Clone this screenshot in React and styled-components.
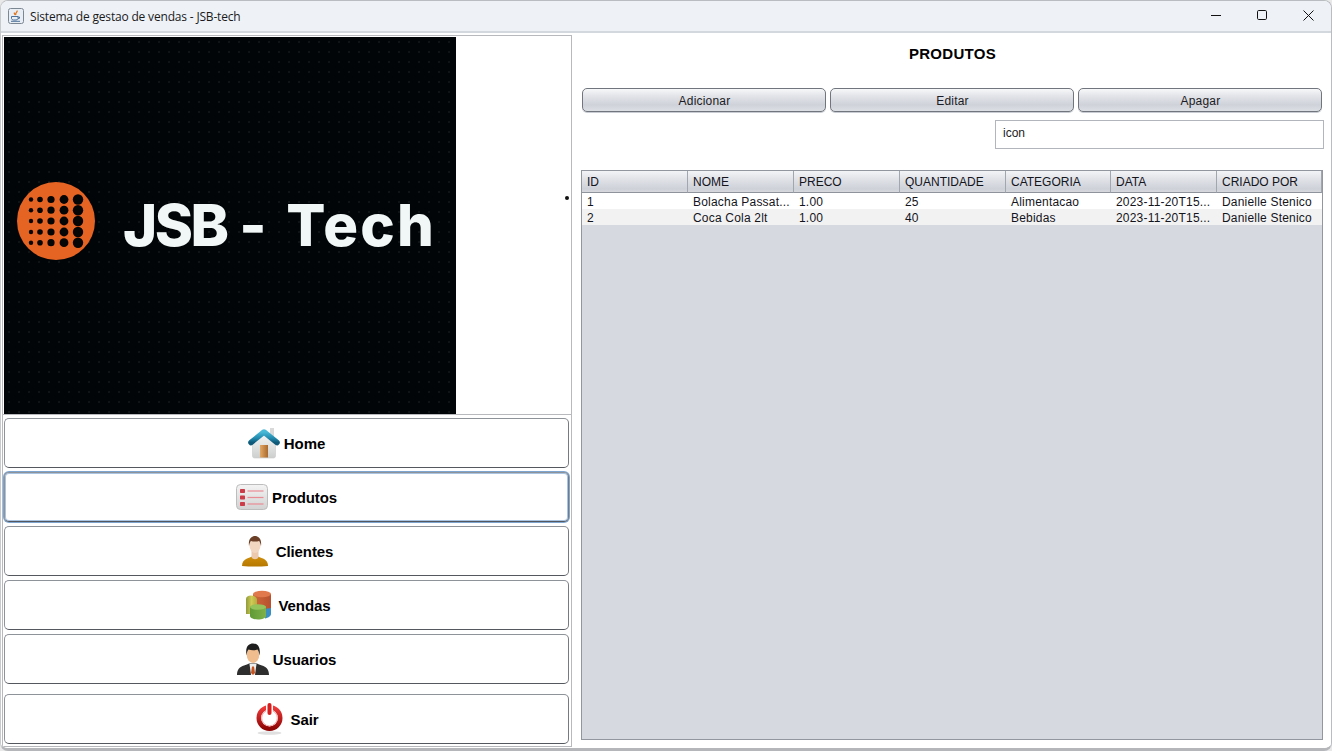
import React from "react";
import styled, { createGlobalStyle } from "styled-components";

const Global = createGlobalStyle`
  html, body { margin: 0; padding: 0; background: #e9e9e9; }
  * { box-sizing: border-box; }
`;

const Window = styled.div`
  width: 1332px; height: 751px; display: flex; flex-direction: column; overflow: hidden;
  background: #fff; border-radius: 8px; border: 1px solid #b9bcc0; border-bottom: 3px solid #b4b6b9;
  border-left-color: #c8cacd;
  font-family: "Liberation Sans", Arial, sans-serif; color: #111;
`;
const TitleBar = styled.div`
  height: 32px; flex: none; display: flex; align-items: center; background: #eef2f7;
  border-bottom: 2px solid #d3d7de; padding-left: 7px;
`;
const TitleText = styled.span`
  margin-left: 6px; font: 12px "Open Sans", "Liberation Sans", sans-serif; color: #1a1a1a; letter-spacing: -0.18px; flex: 1;
`;
const WinButton = styled.div`
  width: 46px; height: 29px; display: flex; align-items: center; justify-content: center; margin-top: -2px;
`;
const Content = styled.div`
  flex: 1; display: flex; min-height: 0; padding: 2px 0 0 1px; background: #fff;
`;
const LeftPanel = styled.div`
  width: 570px; height: 712px; flex: none; border: 1px solid #b7b9bd; padding: 1px; display: flex; flex-direction: column;
`;
const LogoFrame = styled.div`
  height: 378px; flex: none; position: relative; border-bottom: 1px solid #b7b9bd; margin: 0 -1px; padding: 0 1px;
`;
const Logo = styled.div`
  width: 452px; height: 377px; display: flex; align-items: center; background-color: #020507;
  background-image: radial-gradient(circle, #111517 0.7px, transparent 0.8px); background-size: 10px 10px;
  padding: 0 0 9px 13px;
`;
const LogoText = styled.span`
  margin: 0 0 0 28px; font: 800 58px "Inter", "Liberation Sans", sans-serif; color: #f0f7f6; white-space: pre;
  position: relative; top: 4px;
`;
const LogoWord = styled.span`
  letter-spacing: ${p => p.$spacing}px; margin-left: ${p => p.$gap || 0}px;
`;
const SplitDot = styled.i`
  position: absolute; left: 562px; top: 159px; width: 4px; height: 4px; border-radius: 50%; background: #111;
`;
const Nav = styled.div`
  display: flex; flex-direction: column; gap: 4px; padding: 3px 0 0 0;
`;
const NavButton = styled.button`
  width: 565px; height: 50px; margin-top: ${p => (p.$last ? "6px" : "0")}; flex: none; background: #fff; padding: 0; cursor: pointer;
  display: flex; align-items: center; justify-content: center; gap: 4px;
  border: 1px solid #8e9299; border-bottom-color: #55585e; border-right-color: #777a80; border-radius: 5px;
  font: bold 15px "Liberation Sans", Arial, sans-serif; letter-spacing: -0.1px; color: #000;
  box-shadow: ${p => (p.$focus ? "0 0 0 1px #7ea5d0, inset 0 0 0 1px #a9c4e2" : "none")};
  svg { flex: none; }
`;
const RightPanel = styled.div`
  flex: 1; padding: 0 8px 0 10px; display: flex; flex-direction: column; min-width: 0;
`;
const Heading = styled.h1`
  margin: 0; height: 38px; padding-top: 10px; text-align: center; font: bold 15px/18px "Liberation Sans", Arial, sans-serif; letter-spacing: 0.3px; color: #000;
`;
const Toolbar = styled.div`
  margin-top: 15px; display: grid; grid-template-columns: repeat(3, 244px); gap: 4px;
`;
const ToolButton = styled.button`
  height: 24px; padding: 1px 0 0 1px; border: 1px solid #71757d; border-radius: 5px; color: #1c1c24;
  background: linear-gradient(#f7f8f9 0%, #e3e5ea 30%, #cfd2d9 72%, #dcdfe4 100%);
  font: 12px "Liberation Sans", Arial, sans-serif; letter-spacing: 0.2px; box-shadow: 0 1px 0 #c9ccd2;
`;
const SearchRow = styled.div`
  display: flex; justify-content: flex-end; margin-top: 8px; margin-right: -1px;
`;
const Search = styled.div`
  width: 329px; height: 29px; border: 1px solid #b2b5bb; background: #fff; padding: 5px 0 0 7px; font: 12px/14px "Liberation Sans", Arial, sans-serif; color: #222;
`;
const TableWrap = styled.div`
  margin: 21px 0 0 -1px; width: 742px; height: 570px; flex: none; border: 1px solid #92969f; background: #d6d9e0;
`;
const Grid = styled.table`
  width: 740px; border-collapse: separate; border-spacing: 0; table-layout: fixed; font: 12px "Liberation Sans", Arial, sans-serif; color: #14141c;
`;
const HeadCell = styled.th`
  width: ${p => p.$w}px; height: 22px; padding: 0 0 0 5px; text-align: left; font-weight: normal;
  background: linear-gradient(#f3f4f6 0%, #e2e4e9 35%, #ced1d8 85%, #d6d8de 100%);
  border-right: 1px solid #a2a6ae; border-bottom: 1px solid #8f939c;
`;
const Row = styled.tr`
  background: ${p => (p.$alt ? "#f2f2f2" : "#fff")};
`;
const Cell = styled.td`
  height: 16px; padding: 2px 0 0 5px; white-space: nowrap; overflow: hidden; line-height: 14px; letter-spacing: 0.2px;
`;

const JavaIcon = () => (
  <svg width="16" height="16" viewBox="0 0 16 16">
    <rect x="0.5" y="0.5" width="15" height="15" rx="2" fill="#e9eef5" stroke="#7c8794" />
    <path d="M9 2.500c1 1.500-2.500 2.500-1 4.500M6.500 4.500c-.8 1.200.6 1.700.8 2.500" fill="none" stroke="#e2761d" strokeWidth="1.300" />
    <path d="M3.500 8.500h6.500v2a2 2 0 0 1-2 1.500h-2.500a2 2 0 0 1-2-1.500z" fill="none" stroke="#4d7199" />
    <path d="M10 9h1.500v1.300l-1.500.5M3 13.300h9" fill="none" stroke="#4d7199" />
  </svg>
);

const HomeIcon = () => (
  <svg width="32" height="32" viewBox="0 0 32 32">
    <defs>
      <linearGradient id="hw" x1="0" y1="0" x2="0" y2="1"><stop offset="0" stopColor="#f8f8f8" /><stop offset="1" stopColor="#cdcfcf" /></linearGradient>
      <linearGradient id="hr" x1="0" y1="0" x2="0" y2="1"><stop offset="0" stopColor="#49b9d8" /><stop offset=".6" stopColor="#2189ad" /><stop offset="1" stopColor="#0f5a78" /></linearGradient>
      <linearGradient id="hd" x1="0" y1="0" x2="1" y2="0"><stop offset="0" stopColor="#e3a866" /><stop offset="1" stopColor="#a9692c" /></linearGradient>
    </defs>
    <rect x="22" y="1" width="4" height="11" fill="#d9d9d9" />
    <path d="M4.500 13 16 5l11.500 8v16a2 2 0 0 1-2 2h-19a2 2 0 0 1-2-2z" fill="url(#hw)" stroke="#c9c9c9" strokeWidth=".6" />
    <path d="M3 15.500 16 5l13 10.500" fill="none" stroke="url(#hr)" strokeWidth="5.500" strokeLinecap="round" strokeLinejoin="round" />
    <rect x="12" y="18" width="8" height="12.500" fill="url(#hd)" />
  </svg>
);

const ListIcon = () => (
  <svg width="32" height="26" viewBox="0 0 32 26">
    <defs><linearGradient id="lb" x1="0" y1="0" x2="0" y2="1"><stop offset="0" stopColor="#f4f4f4" /><stop offset="1" stopColor="#d2d2d2" /></linearGradient></defs>
    <rect x=".5" y=".5" width="31" height="25" rx="4" fill="url(#lb)" stroke="#bdbdbd" />
    {[7, 13.5, 20].map(y => (
      <g key={y}>
        <rect x="4" y={y - 2} width="5" height="4" rx=".7" fill="#cd3a48" />
        <rect x="11.500" y={y - .6} width="16" height="1.200" fill="#ea8c93" />
      </g>
    ))}
  </svg>
);

const ClientIcon = () => (
  <svg width="32" height="32" viewBox="0 0 32 32">
    <defs><linearGradient id="cb" x1="0" y1="0" x2="0" y2="1"><stop offset="0" stopColor="#cf8e0c" /><stop offset="1" stopColor="#b57800" /></linearGradient></defs>
    <g transform="translate(-1 0)">
      <path d="M3 31c0-4 2-6 5-7.500 2-.8 3.500-1 5-2h6c1.500 1 3 1.200 5 2 3 1.500 5 3.500 5 7.500-8 .8-18 .8-26 0z" fill="url(#cb)" />
      <path d="M12.500 15h7v7c-1 3-6 3-7 0z" fill="#ecc9ad" />
      <ellipse cx="16" cy="10.500" rx="5.500" ry="7.500" fill="#f3d6c0" />
      <path d="M10 11C9 3.500 13 1 16 1s7 2.500 6 10c-.6-2.500-1-4-2-5-2 .8-6 .8-8 0-1 1-1.400 2.500-2 5z" fill="#6b3f28" />
    </g>
  </svg>
);

const ChartIcon = () => (
  <svg width="32" height="32" viewBox="0 0 32 32">
    <defs>
      <linearGradient id="vo" x1="0" y1="0" x2="1" y2="0"><stop offset="0" stopColor="#d06a3c" /><stop offset="1" stopColor="#b5512d" /></linearGradient>
      <linearGradient id="vy" x1="0" y1="0" x2="1" y2="0"><stop offset="0" stopColor="#8f9b3c" /><stop offset=".5" stopColor="#cfcb55" /><stop offset="1" stopColor="#b4ad3f" /></linearGradient>
      <linearGradient id="vg" x1="0" y1="0" x2="1" y2="0"><stop offset="0" stopColor="#5f9a36" /><stop offset="1" stopColor="#7fb148" /></linearGradient>
    </defs>
    <g transform="translate(-1 0)">
      <path d="M11 5h18v15H11z" fill="url(#vo)" />
      <ellipse cx="20" cy="5" rx="9" ry="3.200" fill="#e07a4c" />
      <path d="M4 10c0-2 2-3.500 5-3.500s5 1.500 6 3.500v15H4z" fill="url(#vy)" />
      <path d="M22 20l7-1v6c0 2-3 4-6 4.500z" fill="#3a8fc0" />
      <path d="M8 18c2-1.500 5-2 8-2s7 .5 8 2v9c0 2-4 3.500-8 3.500S8 29 8 27z" fill="url(#vg)" />
      <ellipse cx="16" cy="18" rx="8" ry="2.800" fill="#93c35a" />
    </g>
  </svg>
);

const ManIcon = () => (
  <svg width="32" height="32" viewBox="0 0 32 32">
    <path d="M0 32c0-6 3-8 7-9.500 2-.8 4-1 5-2h8c1 1 3 1.200 5 2 4 1.500 7 3.500 7 9.500z" fill="#2e2e2e" />
    <path d="M12.500 21h7l-1.500 11h-4z" fill="#eee" />
    <path d="M15 23.500h2l1 6.500-2 2-2-2z" fill="#c9521c" />
    <ellipse cx="16" cy="11.500" rx="6.300" ry="8.500" fill="#efbd8e" />
    <path d="M9.500 12.500C8 3 12 .5 16 .5s8 2.500 6.500 12c-.4-3-1-5-2-6-2.500 1-6.500 1-9 0-1 1-1.600 3-2 6z" fill="#1e1e1e" />
  </svg>
);

const PowerIcon = () => (
  <svg width="32" height="32" viewBox="0 0 32 32">
    <defs><linearGradient id="pw" x1="0" y1="0" x2="0" y2="1"><stop offset="0" stopColor="#ef3a3a" /><stop offset="1" stopColor="#8f0505" /></linearGradient></defs>
    <ellipse cx="14.500" cy="30" rx="12" ry="1.800" fill="#e0e0e0" />
    <circle cx="14.500" cy="15" r="10.700" fill="none" stroke="url(#pw)" strokeWidth="4.600" />
    <circle cx="14.500" cy="15" r="7.800" fill="none" stroke="#f2b0b0" strokeWidth="1" />
    <rect x="11" y="0" width="7" height="9" fill="#fff" />
    <rect x="12.500" y="0" width="4" height="12" rx="2" fill="#d51e1e" />
  </svg>
);

const LogoMark = () => {
  const xs = [[14, 2.2], [23, 2.8], [34, 3.6], [47, 4.4], [61, 5.2]];
  const ys = [17.5, 28.2, 39, 50, 60.7];
  return (
    <svg width="78" height="78" viewBox="0 0 78 78">
      <circle cx="39" cy="39" r="39" fill="#e56323" />
      {xs.map(([x, r]) => ys.map(y => <circle key={`${x}-${y}`} cx={x} cy={y} r={r} fill="#060606" />))}
    </svg>
  );
};

const navItems = [
  { label: "Home", icon: <HomeIcon /> },
  { label: "Produtos", icon: <ListIcon />, focus: true },
  { label: "Clientes", icon: <ClientIcon /> },
  { label: "Vendas", icon: <ChartIcon /> },
  { label: "Usuarios", icon: <ManIcon /> },
  { label: "Sair", icon: <PowerIcon />, last: true },
];
const cols = [["ID", 106], ["NOME", 106], ["PRECO", 106], ["QUANTIDADE", 106], ["CATEGORIA", 105], ["DATA", 106], ["CRIADO POR", 105]];
const rows = [
  ["1", "Bolacha Passat...", "1.00", "25", "Alimentacao", "2023-11-20T15...", "Danielle Stenico"],
  ["2", "Coca Cola 2lt", "1.00", "40", "Bebidas", "2023-11-20T15...", "Danielle Stenico"],
];

export default function App() {
  return (
    <>
      <Global />
      <Window>
        <TitleBar>
          <JavaIcon />
          <TitleText>Sistema de gestao de vendas - JSB-tech</TitleText>
          <WinButton>
            <svg width="11" height="11" viewBox="0 0 11 11"><path d="M0 5.500h10" stroke="#111" /></svg>
          </WinButton>
          <WinButton>
            <svg width="11" height="11" viewBox="0 0 11 11"><rect x=".5" y=".5" width="9" height="9" rx="1.200" fill="none" stroke="#111" /></svg>
          </WinButton>
          <WinButton>
            <svg width="11" height="11" viewBox="0 0 11 11"><path d="M.5.500l10 10M10.500.500l-10 10" stroke="#111" /></svg>
          </WinButton>
        </TitleBar>
        <Content>
          <LeftPanel>
            <LogoFrame>
              <Logo>
                <LogoMark />
                <LogoText>
                  <LogoWord $spacing={-2.5}>JSB</LogoWord>
                  {" - "}
                  <LogoWord $spacing={2.2} $gap={7}>Tech</LogoWord>
                </LogoText>
              </Logo>
              <SplitDot />
            </LogoFrame>
            <Nav>
              {navItems.map(n => (
                <NavButton key={n.label} $focus={n.focus} $last={n.last}>
                  {n.icon}
                  {n.label}
                </NavButton>
              ))}
            </Nav>
          </LeftPanel>
          <RightPanel>
            <Heading>PRODUTOS</Heading>
            <Toolbar>
              <ToolButton>Adicionar</ToolButton>
              <ToolButton>Editar</ToolButton>
              <ToolButton>Apagar</ToolButton>
            </Toolbar>
            <SearchRow><Search>icon</Search></SearchRow>
            <TableWrap>
              <Grid>
                <thead><tr>{cols.map(([c, w]) => <HeadCell key={c} $w={w}>{c}</HeadCell>)}</tr></thead>
                <tbody>
                  {rows.map((r, i) => (
                    <Row key={r[0]} $alt={i === 1}>
                      {r.map((v, j) => <Cell key={j}>{v}</Cell>)}
                    </Row>
                  ))}
                </tbody>
              </Grid>
            </TableWrap>
          </RightPanel>
        </Content>
      </Window>
    </>
  );
}
